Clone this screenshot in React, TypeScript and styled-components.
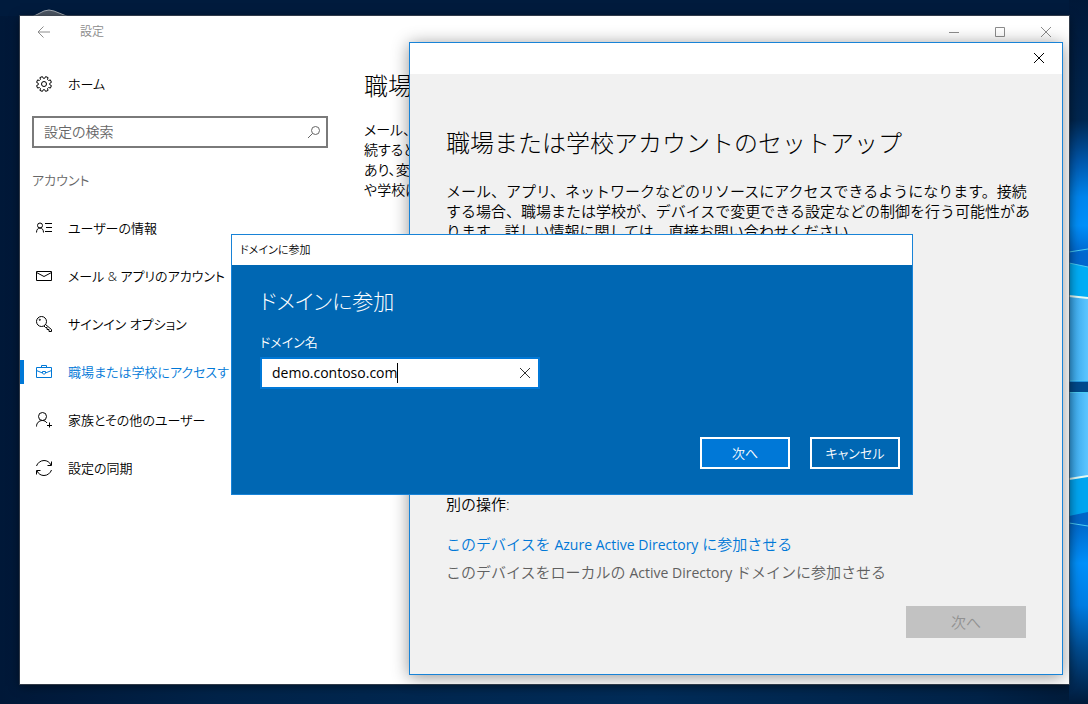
import React from "react";
import styled, { createGlobalStyle } from "styled-components";

const ACCENT = "#0078d7";
const SANS = `"Open Sans", "Noto Sans CJK JP", sans-serif`;

const GlobalStyle = createGlobalStyle`
  *, *::before, *::after { box-sizing: border-box; }
  body {
    margin: 0;
    font-family: ${SANS};
    font-size: 15px;
    font-weight: 350;
    line-height: 20px;
    color: #000;
  }
  h1, h2, p, ul { margin: 0; padding: 0; font-weight: inherit; }
  ul { list-style: none; }
  button, input { font: inherit; color: inherit; padding: 0; }
`;

const Desktop = styled.div`
  position: relative;
  min-height: 100vh;
  overflow: hidden;
  background: #00193a;
`;

const Wallpaper = styled.svg`
  position: absolute;
  inset: 0;
  width: 100%;
  height: 100%;
`;

const SettingsWindow = styled.main`
  position: absolute;
  inset: 16px 19px 20px 20px;
  display: flex;
  flex-direction: column;
  background: #fff;
  box-shadow: 0 0 0 1px rgba(70, 76, 84, 0.7), 0 2px 10px rgba(0, 0, 0, 0.5);
  overflow: hidden;
`;

const TitleBar = styled.header`
  display: flex;
  align-items: center;
  height: 32px;
  padding: 0 15px 0 16px;
  gap: 28px;
  color: #8c8c8c;
  font-size: 12px;
`;

const WindowControls = styled.div`
  display: flex;
  gap: 30px;
  margin-left: auto;
`;

const IconButton = styled.button`
  display: flex;
  align-items: center;
  justify-content: center;
  width: 16px;
  height: 16px;
  border: 0;
  background: none;
`;

const Columns = styled.div`
  display: flex;
  flex: 1;
`;

const Sidebar = styled.nav`
  flex: none;
  width: 344px;
  padding-top: 12px;
  font-feature-settings: "palt";
`;

const NavLink = styled.a<{ $active?: boolean }>`
  display: flex;
  align-items: center;
  gap: 16px;
  height: 48px;
  padding-left: ${(p) => (p.$active ? 12 : 16)}px;
  color: ${(p) => (p.$active ? ACCENT : "#000")};
  font-size: 13px;
  text-decoration: none;
  white-space: nowrap;

  &::before {
    content: "";
    display: ${(p) => (p.$active ? "block" : "none")};
    width: 4px;
    height: 24px;
    margin: 0 -16px 0 -12px;
    background: ${ACCENT};
  }

  & > svg {
    margin-left: ${(p) => (p.$active ? 12 : 0)}px;
  }
`;

const SearchBox = styled.label`
  display: flex;
  align-items: center;
  height: 32px;
  margin: 8px 36px 8px 12px;
  padding: 0 4px 0 10px;
  border: 2px solid #7a7a7a;
  color: #666;

  input {
    flex: 1;
    min-width: 0;
    border: 0;
    outline: 0;
    background: none;
    font-size: 14px;
  }

  input::placeholder {
    color: #666;
  }
`;

const SectionHeading = styled.h2`
  height: 48px;
  padding-left: 12px;
  color: #666;
  font-size: 13px;
  line-height: 48px;
`;

const Content = styled.section`
  padding-top: 22px;
  font-size: 14px;
  white-space: nowrap;
  font-feature-settings: "palt";
`;

const PageTitle = styled.h1`
  font-size: 24px;
  font-weight: 300;
  line-height: 32px;
`;

const DialogTitle = styled(PageTitle)`
  font-size: 21px;
`;

const ContentText = styled.p`
  margin-top: 18px;
`;

const SetupWindow = styled.section`
  position: absolute;
  top: 42px;
  right: 25px;
  bottom: 29px;
  width: 654px;
  display: flex;
  flex-direction: column;
  border: 1px solid #1883d7;
  background: #f1f1f1;
  box-shadow: 0 2px 16px rgba(0, 0, 0, 0.42);
`;

const SetupTitleBar = styled.header`
  display: flex;
  align-items: center;
  justify-content: flex-end;
  height: 31px;
  padding: 0 15px 2px 0;
  background: #fff;
`;

const SetupBody = styled.div`
  flex: 1;
  display: flex;
  flex-direction: column;
  padding: 53px 36px 36px;
`;

const SetupText = styled.p`
  margin-top: 22px;
  white-space: nowrap;
`;

const OtherActions = styled.div`
  margin-top: auto;
`;

const ActionLink = styled.a<{ $muted?: boolean }>`
  display: block;
  height: 28px;
  color: ${(p) => (p.$muted ? "#606060" : ACCENT)};
  line-height: 28px;
  text-decoration: none;
`;

const Latin = styled.span`
  font-size: 14px;
  font-weight: 400;
`;

const ActionList = styled.div`
  margin: 16px 0 20px;
`;

const DisabledButton = styled.button`
  align-self: flex-end;
  width: 120px;
  height: 32px;
  border: 0;
  background: #c2c2c2;
  color: #919191;
`;

const JoinDialog = styled.section`
  position: absolute;
  top: 234px;
  left: 231px;
  width: 682px;
  border: 1px solid #1883d7;
  background: #0067b3;
  color: #fff;
  font-feature-settings: "palt";
`;

const DialogTitleBar = styled.header`
  height: 30px;
  padding-left: 8px;
  background: #fff;
  color: #000;
  font-size: 11px;
  line-height: 30px;
`;

const DialogForm = styled.form`
  display: flex;
  flex-direction: column;
  padding: 20px 12px 25px 28px;
`;

const FieldLabel = styled.label`
  margin: 15px 0 5px;
  font-size: 13px;
`;

const DomainField = styled.div`
  display: flex;
  align-items: center;
  width: 280px;
  height: 32px;
  padding: 0 5px 0 10px;
  border: 2px solid ${ACCENT};
  background: #fff;
  color: #000;

  input {
    field-sizing: content;
    max-width: 220px;
    border: 0;
    outline: 0;
    font-size: 14px;
    font-weight: 400;
  }

  button {
    margin-left: auto;
    color: #333;
  }
`;

const Caret = styled.span`
  width: 1px;
  height: 20px;
  background: #000;
`;

const DialogButtons = styled.div`
  display: flex;
  justify-content: flex-end;
  gap: 20px;
  margin-top: 48px;
`;

const DialogButton = styled.button<{ $primary?: boolean }>`
  width: 90px;
  height: 32px;
  border: 2px solid #fff;
  background: ${(p) => (p.$primary ? ACCENT : "transparent")};
  font-size: 13px;
`;

function Icon({ children, size = 16 }: { children: React.ReactNode; size?: number }) {
  return (
    <svg width={size} height={size} viewBox="0 0 16 16" fill="none" stroke="currentColor" aria-hidden="true">
      {children}
    </svg>
  );
}

const CloseIcon = () => (
  <Icon>
    <path d="M3 3l10 10M13 3L3 13" />
  </Icon>
);

const GearIcon = () => {
  const points: string[] = [];
  for (let i = 0; i < 8; i++) {
    [
      [-15, 5.8],
      [-10, 7.6],
      [10, 7.6],
      [15, 5.8],
    ].forEach(([offset, r]) => {
      const a = ((i * 45 + 22.5 + offset) * Math.PI) / 180;
      points.push(`${(8 + r * Math.cos(a)).toFixed(2)},${(8 + r * Math.sin(a)).toFixed(2)}`);
    });
  }
  return (
    <Icon>
      <polygon points={points.join(" ")} />
      <circle cx="8" cy="8" r="2.5" />
    </Icon>
  );
};

const navItems = [
  {
    label: "ユーザーの情報",
    icon: (
      <>
        <circle cx="4" cy="5.500" r="2.500" />
        <path d="M.5 12.500c0-3 1.500-4.500 3.500-4.500s3.500 1.500 3.500 4.500M9 3.500h7M10 7.500h6M9 11.500h7" />
      </>
    ),
  },
  {
    label: "メール & アプリのアカウント",
    icon: <path d="M.5 3.500h15v9H.5zM.5 4.500L8 8.500l7.500-4" />,
  },
  {
    label: "サインイン オプション",
    icon: (
      <>
        <circle cx="5.500" cy="5.500" r="5" />
        <circle cx="3.800" cy="3.800" r=".6" />
        <path d="M9.500 8.500l6 5v2h-2.500v-2h-2v-2h-1.500l-1.500-1.500" />
      </>
    ),
  },
  {
    label: "職場または学校にアクセスす",
    active: true,
    icon: (
      <path d="M.5 3.500h15v10H.5zM5.500 3.500v-2h5v2M.5 6.500l6 2.500M15.500 6.500l-6 2.500M6.500 7.500h3v1.500L8 10.500 6.500 9z" />
    ),
  },
  {
    label: "家族とその他のユーザー",
    icon: (
      <>
        <circle cx="6.500" cy="4.500" r="4" />
        <path d="M.5 14.500c0-3.500 2.500-6 6-6 2 0 3.500 1 4.500 2.500M13.500 10.500v5M11 13.500h5" />
      </>
    ),
  },
  {
    label: "設定の同期",
    icon: (
      <path d="M.5 6C1.500 3 4.500.5 8 .5c3 0 5.500 1.500 7 4.500M15.500 1.500v4h-4M15.500 10C14.500 13 11.500 15.500 8 15.500c-3 0-5.500-1.500-7-4.500M.5 14.500v-4h4" />
    ),
  },
];

export default function App() {
  return (
    <>
      <GlobalStyle />
      <Desktop>
        <Wallpaper viewBox="0 0 1088 704" preserveAspectRatio="none" aria-hidden="true">
          <defs>
            <linearGradient id="night" x1="0" x2="1" y1="0" y2="0">
              <stop offset="0" stopColor="#001838" />
              <stop offset=".2" stopColor="#002349" />
              <stop offset=".6" stopColor="#002c58" />
              <stop offset=".9" stopColor="#002348" />
              <stop offset="1" stopColor="#001a38" />
            </linearGradient>
            <linearGradient id="glow" x1="0" x2="0" y1="0" y2="1">
              <stop offset="0" stopColor="#001838" />
              <stop offset=".17" stopColor="#002750" />
              <stop offset=".23" stopColor="#0058ad" />
              <stop offset=".28" stopColor="#0085ed" />
              <stop offset=".32" stopColor="#0090fa" />
              <stop offset=".36" stopColor="#0068cf" />
              <stop offset=".74" stopColor="#0066c8" />
              <stop offset=".8" stopColor="#0090fa" />
              <stop offset=".86" stopColor="#007de3" />
              <stop offset=".92" stopColor="#004d92" />
              <stop offset="1" stopColor="#001a3a" />
            </linearGradient>
            <linearGradient id="pane" x1="0" x2="1" y1="0" y2="0">
              <stop offset="0" stopColor="#35a5ea" />
              <stop offset="1" stopColor="#5cc5ff" />
            </linearGradient>
          </defs>
          <rect width="1088" height="704" fill="url(#night)" />
          <rect width="1088" height="16" fill="#001b3d" />
          <path d="M32 17l12-6 5-1 5 1 15 6z" fill="#4e5866" stroke="#a5abb2" />
          <rect x="1069" width="19" height="704" fill="url(#glow)" />
          <path d="M1069 263l19 4v113h-19z" fill="#00adf5" />
          <path d="M1069 296l19 2v83h-19z" fill="url(#pane)" />
          <path d="M1069 392h19v120l-19 4z" fill="#00a5f0" />
          <path d="M1069 392h19v84l-19 3z" fill="url(#pane)" />
          <rect x="1069" y="382" width="19" height="10" fill="#004a8c" />
          <path d="M1069 252l19-3M1069 263l19 4M1069 381h19M1069 392.500h19M1069 523l19 3" stroke="#4ccdf5" />
          <path d="M1069 296l19 2M1069 479l19-3" stroke="#e3faf5" strokeWidth="2" />
        </Wallpaper>

        <SettingsWindow>
          <TitleBar>
            <IconButton aria-label="戻る">
              <Icon>
                <path d="M14 8H2M7.500 2.500L2 8l5.500 5.500" />
              </Icon>
            </IconButton>
            <span>設定</span>
            <WindowControls>
              <IconButton aria-label="最小化">
                <Icon>
                  <path d="M3 8.500h10" />
                </Icon>
              </IconButton>
              <IconButton aria-label="最大化">
                <Icon>
                  <path d="M3.500 3.500h9v9h-9z" />
                </Icon>
              </IconButton>
              <IconButton aria-label="閉じる">
                <CloseIcon />
              </IconButton>
            </WindowControls>
          </TitleBar>
          <Columns>
            <Sidebar>
              <NavLink href="#home">
                <GearIcon />
                ホーム
              </NavLink>
              <SearchBox>
                <input type="search" placeholder="設定の検索" aria-label="設定の検索" />
                <Icon>
                  <circle cx="9.500" cy="6.500" r="4" />
                  <path d="M6.500 9.500L2 14" />
                </Icon>
              </SearchBox>
              <SectionHeading>アカウント</SectionHeading>
              <ul>
                {navItems.map((item) => (
                  <li key={item.label}>
                    <NavLink href="#" $active={item.active}>
                      <Icon>{item.icon}</Icon>
                      {item.label}
                    </NavLink>
                  </li>
                ))}
              </ul>
            </Sidebar>
            <Content>
              <PageTitle>職場</PageTitle>
              <ContentText>
                メール、ア
                <br />
                続すると
                <br />
                あり、変
                <br />
                や学校に
              </ContentText>
            </Content>
          </Columns>
        </SettingsWindow>

        <SetupWindow>
          <SetupTitleBar>
            <IconButton aria-label="閉じる">
              <CloseIcon />
            </IconButton>
          </SetupTitleBar>
          <SetupBody>
            <PageTitle>職場または学校アカウントのセットアップ</PageTitle>
            <SetupText>
              メール、アプリ、ネットワークなどのリソースにアクセスできるようになります。接続
              <br />
              する場合、職場または学校が、デバイスで変更できる設定などの制御を行う可能性があ
              <br />
              ります。詳しい情報に関しては、直接お問い合わせください。
            </SetupText>
            <OtherActions>
              <p>別の操作:</p>
              <ActionList>
                <ActionLink href="#azure">
                  このデバイスを <Latin>Azure Active Directory</Latin> に参加させる
                </ActionLink>
                <ActionLink href="#local" $muted>
                  このデバイスをローカルの <Latin>Active Directory</Latin> ドメインに参加させる
                </ActionLink>
              </ActionList>
            </OtherActions>
            <DisabledButton disabled>次へ</DisabledButton>
          </SetupBody>
        </SetupWindow>

        <JoinDialog role="dialog" aria-labelledby="join-title">
          <DialogTitleBar>ドメインに参加</DialogTitleBar>
          <DialogForm onSubmit={(e) => e.preventDefault()}>
            <DialogTitle as="h2" id="join-title">
              ドメインに参加
            </DialogTitle>
            <FieldLabel htmlFor="domain">ドメイン名</FieldLabel>
            <DomainField>
              <input id="domain" type="text" defaultValue="demo.contoso.com" />
              <Caret />
              <IconButton type="button" aria-label="クリア">
                <CloseIcon />
              </IconButton>
            </DomainField>
            <DialogButtons>
              <DialogButton $primary type="submit">
                次へ
              </DialogButton>
              <DialogButton type="button">キャンセル</DialogButton>
            </DialogButtons>
          </DialogForm>
        </JoinDialog>
      </Desktop>
    </>
  );
}
